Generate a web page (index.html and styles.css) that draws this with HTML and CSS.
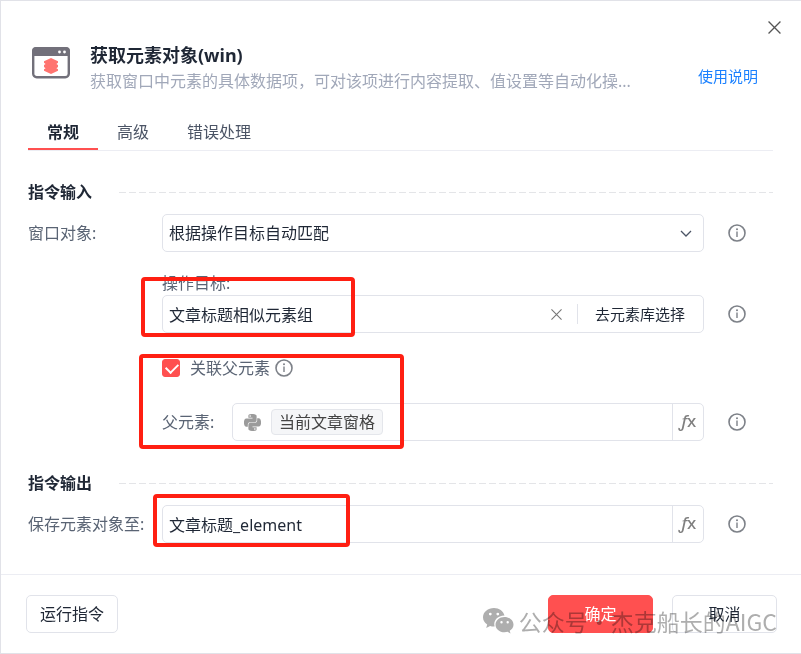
FILE: index.html
```html
<!DOCTYPE html>
<html lang="zh-CN">
<head>
  <meta charset="UTF-8">
  <title>获取元素对象(win)</title>
  <link rel="stylesheet" href="styles.css">
</head>
<body>
  <svg class="sprite" aria-hidden="true">
    <symbol id="info" viewBox="0 0 18 18">
      <circle cx="9" cy="9" r="8" fill="none" stroke="currentColor" stroke-width="1.6"/>
      <path d="M9 7.4v5.600" stroke="currentColor" stroke-width="1.400"/>
      <circle cx="9" cy="5.300" r="1" fill="currentColor"/>
    </symbol>
    <symbol id="cross" viewBox="0 0 12 12">
      <path d="M.5.5l11 11M11.5.5l-11 11" fill="none" stroke="currentColor" stroke-width="1.2"/>
    </symbol>
  </svg>

  <div class="dialog">
    <button class="close" aria-label="关闭"><svg width="13" height="13"><use href="#cross"/></svg></button>

    <!-- 标题 -->
    <header class="header">
      <svg class="logo" width="38" height="32" viewBox="0 0 38 32">
        <rect x="1.200" y="1.200" width="35.600" height="29" rx="3.500" fill="#fff" stroke="#72707a" stroke-width="2.400"/>
        <path d="M0 9V4a4 4 0 0 1 4-4h30a4 4 0 0 1 4 4v5z" fill="#72707a"/>
        <circle cx="27.500" cy="5" r="1.400" fill="#fff"/>
        <circle cx="32.500" cy="5" r="1.400" fill="#fff"/>
        <path d="M19 11l7 3.200v1.600l-1.600 1.200 1.600 1v2l-1.600 1.200 1.600 1v1.600L19 27l-7-3.200v-1.600l1.600-1-1.600-1.200v-2l1.600-1-1.600-1.200v-1.600z" fill="#ff7470"/>
      </svg>
      <div class="heading">
        <h1>获取元素对象(win)</h1>
        <p>获取窗口中元素的具体数据项，可对该项进行内容提取、值设置等自动化操...</p>
      </div>
      <a class="help" href="#">使用说明</a>
    </header>

    <nav class="tabs">
      <button class="tab active">常规</button>
      <button class="tab">高级</button>
      <button class="tab">错误处理</button>
    </nav>

    <!-- 表单 -->
    <main class="content">
      <h2>指令输入</h2>

      <div class="row">
        <label class="name" for="win">窗口对象:</label>
        <div class="field">
          <select id="win">
            <option>根据操作目标自动匹配</option>
          </select>
          <svg class="arrow" width="12" height="7" viewBox="0 0 12 7"><path d="M1 1l5 5 5-5" fill="none" stroke="currentColor" stroke-width="1.3"/></svg>
        </div>
        <svg class="info"><use href="#info"/></svg>
      </div>

      <div class="group target">
        <label class="top-label" for="target">操作目标:</label>
        <div class="row">
          <div class="field">
            <input type="text" id="target" value="文章标题相似元素组">
            <button class="clear" aria-label="清空"><svg width="11" height="11"><use href="#cross"/></svg></button>
            <button class="pick">去元素库选择</button>
          </div>
          <svg class="info"><use href="#info"/></svg>
        </div>
        <span class="mark mark-target"></span>
      </div>

      <div class="group parent">
        <div class="check">
          <input type="checkbox" id="link" checked>
          <label for="link">关联父元素</label>
          <svg class="info"><use href="#info"/></svg>
        </div>
        <div class="row">
          <label class="sub-name" for="parent">父元素:</label>
          <div class="field">
            <svg class="python" width="17" height="17" viewBox="0 0 24 24"><path fill="currentColor" d="M14.250.18l.9.2.73.26.59.3.45.32.34.34.25.34.16.33.1.3.04.26.02.2-.01.13V8.500l-.05.63-.13.55-.21.46-.26.38-.3.31-.33.25-.35.19-.35.14-.33.1-.3.07-.26.04-.21.02H8.770l-.69.05-.59.14-.5.22-.41.27-.33.32-.27.35-.2.36-.15.37-.1.35-.07.32-.04.27-.02.21v3.060H3.170l-.21-.03-.28-.07-.32-.12-.35-.18-.36-.26-.36-.36-.35-.46-.32-.59-.28-.73-.21-.88-.14-1.050-.05-1.230.06-1.220.16-1.040.24-.87.32-.71.36-.57.4-.44.42-.33.42-.24.4-.16.36-.1.32-.05.24-.01h.16l.06.01h8.160v-.83H6.180l-.01-2.750-.02-.37.05-.34.11-.31.17-.28.25-.26.31-.23.38-.2.44-.18.51-.15.58-.12.64-.1.71-.06.77-.04.84-.02 1.270.05zm-6.300 1.980l-.23.33-.08.41.08.41.23.34.33.22.41.09.41-.09.33-.22.23-.34.08-.41-.08-.41-.23-.33-.33-.22-.41-.09-.41.09zm13.090 3.950l.28.06.32.12.35.18.36.27.36.35.35.47.32.59.28.73.21.88.14 1.040.05 1.230-.06 1.230-.16 1.040-.24.86-.32.71-.36.57-.4.45-.42.33-.42.24-.4.16-.36.09-.32.05-.24.02-.16-.01h-8.220v.82h5.840l.01 2.760.02.36-.05.34-.11.31-.17.29-.25.25-.31.24-.38.2-.44.17-.51.15-.58.13-.64.09-.71.07-.77.04-.84.01-1.270-.04-1.070-.14-.9-.2-.73-.25-.59-.3-.45-.33-.34-.34-.25-.34-.16-.33-.1-.3-.04-.25-.02-.2.01-.13v-5.340l.05-.64.13-.54.21-.46.26-.38.3-.32.33-.24.35-.2.35-.14.33-.1.3-.06.26-.04.21-.02.13-.01h5.840l.69-.05.59-.14.5-.21.41-.28.33-.32.27-.35.2-.36.15-.36.1-.35.07-.32.04-.28.02-.21V6.070h2.090l.14.01zm-6.470 14.250l-.23.33-.08.41.08.41.23.33.33.23.41.08.41-.08.33-.23.23-.33.08-.41-.08-.41-.23-.33-.33-.23-.41-.08-.41.08z"/></svg>
            <span class="tag">当前文章窗格</span>
            <input type="text" id="parent">
            <button class="fx"><i>ƒ</i>x</button>
          </div>
          <svg class="info"><use href="#info"/></svg>
        </div>
        <span class="mark mark-parent"></span>
      </div>

      <h2>指令输出</h2>

      <div class="group">
        <div class="row">
          <label class="name" for="save">保存元素对象至:</label>
          <div class="field">
            <input type="text" id="save" value="文章标题_element">
            <button class="fx"><i>ƒ</i>x</button>
          </div>
          <svg class="info"><use href="#info"/></svg>
        </div>
        <span class="mark mark-save"></span>
      </div>
    </main>

    <!-- 底部按钮 -->
    <footer class="footer">
      <button class="btn run">运行指令</button>
      <button class="btn primary">确定</button>
      <button class="btn">取消</button>
      <div class="watermark">
        <svg width="32" height="26" viewBox="0 0 32 26">
          <path fill="currentColor" fill-rule="evenodd" d="M11 0C5 0 0 4 0 9.300c0 3 1.500 5.500 4.200 7.200L3.200 20l3.900-2c1.500.4 3 .6 4.500.5C10 12.500 14.500 7.500 21.500 7.500 20.500 3 16 0 11 0zM7.300 4.700a1.400 1.400 0 1 1 0 2.800 1.400 1.400 0 0 1 0-2.800zm7.500 0a1.400 1.400 0 1 1 0 2.800 1.400 1.400 0 0 1 0-2.800z"/>
          <path fill="currentColor" fill-rule="evenodd" d="M21.500 9c-5 0-9 3.500-9 7.700s4 7.600 9 7.600c1.100 0 2.100-.2 3.100-.5l2.900 1.700-.8-2.700c2.300-1.500 3.800-3.600 3.800-6.100C30.500 12.500 26.500 9 21.500 9zm-3 4a1.200 1.200 0 1 1 0 2.400 1.200 1.200 0 0 1 0-2.400zm6.200 0a1.200 1.200 0 1 1 0 2.400 1.200 1.200 0 0 1 0-2.400z"/>
        </svg>
        <span>公众号·杰克船长的AIGC</span>
      </div>
    </footer>
  </div>
</body>
</html>
```
FILE: styles.css
```css
* {
  box-sizing: border-box;
}

body {
  margin: 0;
  background: #fff;
  color: #1f2735;
  font-family: "Noto Sans", "Noto Sans CJK SC", sans-serif;
  font-size: 16px;
  line-height: 24px;
}

button,
input,
select {
  margin: 0;
  padding: 0;
  border: none;
  background: none;
  color: inherit;
  font: inherit;
}

button {
  cursor: pointer;
}

.sprite {
  display: none;
}

.dialog {
  position: relative;
  border: 1px solid #e1e2e8;
  border-right: none;
}

.close {
  position: absolute;
  top: 20px;
  right: 20px;
  display: flex;
  color: #555;
}

/* 标题 */
.header {
  display: flex;
  align-items: flex-start;
  padding: 42px 43px 0 31px;
}

.logo {
  flex: none;
  margin-top: 4px;
}

.heading {
  flex: 1;
  min-width: 0;
  margin-left: 20px;
}

h1 {
  margin: 0;
  font-size: 18px;
  line-height: 24px;
}

.heading p {
  margin: 2px 0 0;
  color: #a1a8b9;
}

.help {
  margin-top: 21px;
  color: #1a80ff;
  font-size: 15px;
  text-decoration: none;
}

.tabs {
  display: flex;
  margin: 21px 28px 0 27px;
  border-bottom: 1px solid #ecedf3;
}

.tab {
  height: 36px;
  padding: 2px 19px 0;
  border-bottom: 2px solid transparent;
  color: #4b5465;
}

.tab.active {
  border-color: #ff5050;
  color: #1f2735;
  font-weight: bold;
}

/* 表单 */
.content {
  padding: 29px 28px 31px 27px;
}

h2 {
  display: flex;
  align-items: center;
  gap: 27px;
  margin: 0 0 10px;
  font-size: 16px;
  line-height: 24px;
}

h2::after {
  content: "";
  flex: 1;
  height: 1px;
  background: repeating-linear-gradient(to right, #e4e5e8 0 7px, transparent 7px 10px);
}

.row {
  display: flex;
  align-items: center;
}

.name {
  width: 134px;
  color: #5a6474;
  white-space: nowrap;
}

.field {
  position: relative;
  flex: 1;
  display: flex;
  align-items: center;
  min-width: 0;
  height: 38px;
  border: 1px solid #e1e3ea;
  border-radius: 5px;
}

.field input,
.field select {
  flex: 1;
  min-width: 0;
  height: 36px;
  padding: 0 6px;
  outline: none;
}

.field select {
  appearance: none;
}

.arrow {
  position: absolute;
  right: 11px;
  color: #4b5465;
  pointer-events: none;
}

.info {
  flex: none;
  width: 18px;
  height: 18px;
  margin: 0 27px 0 24px;
  color: #7d8188;
}

.group {
  position: relative;
}

.target,
.parent {
  margin-left: 134px;
}

.target {
  margin-top: 19px;
}

.parent {
  margin-top: 23px;
  margin-bottom: 30px;
}

.top-label {
  display: block;
  color: #5a6474;
}

.clear {
  display: flex;
  padding: 0 15px;
  color: #777;
}

.pick {
  padding: 0 18px 0 17px;
  border-left: 1px solid #e1e3ea;
  font-size: 15px;
  line-height: 20px;
}

.check {
  display: flex;
  align-items: center;
  margin-bottom: 23px;
  color: #5a6474;
}

.check input {
  position: relative;
  appearance: none;
  width: 18px;
  height: 18px;
  margin-right: 10px;
  border: 1px solid #d5d8de;
  border-radius: 3px;
}

.check input:checked {
  border-color: #ff5050;
  background: #ff5050;
}

.check input:checked::after {
  content: "";
  position: absolute;
  left: 5px;
  top: 1px;
  width: 6px;
  height: 10px;
  border: solid #fff;
  border-width: 0 2px 2px 0;
  transform: rotate(45deg);
}

.check .info {
  margin: 0 0 0 5px;
}

.sub-name {
  width: 70px;
  color: #5a6474;
}

.python {
  flex: none;
  margin: 0 10px 0 11px;
  color: #9b9b9b;
}

.tag {
  padding: 0 7px;
  border: 1px solid #e4e6eb;
  border-radius: 4px;
  background: #f5f6f8;
  color: #444;
  white-space: nowrap;
}

.fx {
  width: 31px;
  height: 36px;
  padding-bottom: 2px;
  border-left: 1px solid #e1e3ea;
  color: #808080;
  font-size: 17px;
  font-weight: 500;
}

/* 红框标注 */
.mark {
  position: absolute;
  border: 4px solid #ff1f12;
  border-radius: 4px;
  pointer-events: none;
}

.mark-target {
  left: -21px;
  top: 6px;
  width: 214px;
  height: 60px;
}

.mark-parent {
  left: -23px;
  top: -2px;
  width: 265px;
  height: 95px;
}

.mark-save {
  left: 125px;
  top: -11px;
  width: 197px;
  height: 53px;
}

/* 底部 */
.footer {
  position: relative;
  display: flex;
  gap: 19px;
  padding: 20px 24px 20px 25px;
  border-top: 1px solid #ecedf3;
}

.btn {
  width: 105px;
  height: 38px;
  border: 1px solid #e1e3ea;
  border-radius: 5px;
}

.run {
  width: 92px;
  margin-right: auto;
}

.primary {
  border-color: #ff5050;
  background: #ff5050;
  color: #fff;
}

.watermark {
  position: absolute;
  right: 24px;
  bottom: 16px;
  display: flex;
  align-items: center;
  gap: 4px;
  color: #777;
  font-family: "Noto Sans CJK SC", sans-serif;
  font-size: 23px;
  line-height: 32px;
  white-space: nowrap;
  mix-blend-mode: multiply;
  opacity: 0.6;
  pointer-events: none;
}
```
